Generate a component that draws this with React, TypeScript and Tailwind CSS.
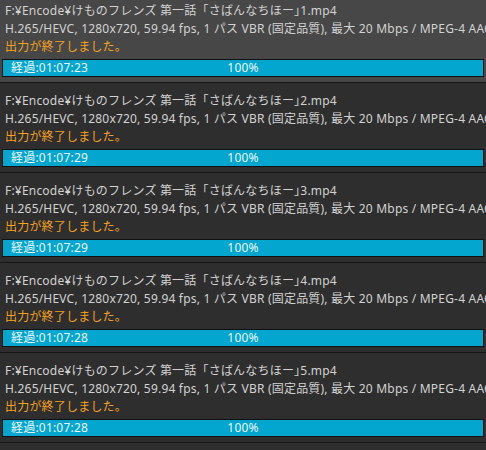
import React from 'react';

interface Job {
  file: string;
  elapsed: string;
}

const jobs: Job[] = [
  { file: 'F:¥Encode¥けものフレンズ 第一話「さばんなちほー」1.mp4', elapsed: '01:07:23' },
  { file: 'F:¥Encode¥けものフレンズ 第一話「さばんなちほー」2.mp4', elapsed: '01:07:29' },
  { file: 'F:¥Encode¥けものフレンズ 第一話「さばんなちほー」3.mp4', elapsed: '01:07:29' },
  { file: 'F:¥Encode¥けものフレンズ 第一話「さばんなちほー」4.mp4', elapsed: '01:07:28' },
  { file: 'F:¥Encode¥けものフレンズ 第一話「さばんなちほー」5.mp4', elapsed: '01:07:28' },
];

const settings =
  'H.265/HEVC, 1280x720, 59.94 fps, 1 パス VBR (固定品質), 最大 20 Mbps / MPEG-4 AAC-LC, 48 kHz, 2ch, 128 kbps';

// closing bracket is half-width in the original UI font
function FileName({ name }: { name: string }) {
  const [head, tail] = name.split('」');
  return (
    <>
      {head}
      <span className="[font-feature-settings:'palt']">」</span>
      {tail}
    </>
  );
}

function JobRow({ job, selected }: { job: Job; selected: boolean }) {
  return (
    <div
      className={`border-b border-[#161616] pt-[9px] pb-[5px] ${
        selected ? 'bg-[#474747]' : 'bg-[#2e2e2e]'
      }`}
    >
      <div className="px-[5px] text-[12px] tracking-[0.2px] leading-[18px] whitespace-nowrap overflow-hidden">
        <div className="text-[#d2d2d2]">
          <FileName name={job.file} />
        </div>
        <div className="text-[#d2d2d2]">{settings}</div>
        <div className="text-[#f5a21e]">出力が終了しました。</div>
      </div>
      <div className="mx-[2px] mt-[3px] h-[18px] border border-[#111] bg-[#02a6cf] relative flex items-center text-[12px] tracking-[0.2px] text-[#eef6f9]">
        <span className="pl-[8px]">経過:{job.elapsed}</span>
        <span className="absolute left-0 right-0 text-center">100%</span>
      </div>
    </div>
  );
}

export default function App() {
  return (
    <div
      className="w-[486px] h-[450px] overflow-hidden bg-[#2e2e2e]"
      style={{ fontFamily: '"Noto Sans", "Noto Sans CJK JP", sans-serif' }}
    >
      <div className="-mt-[7px]">
        {jobs.map((job, i) => (
          <JobRow key={i} job={job} selected={i === 0} />
        ))}
      </div>
    </div>
  );
}
